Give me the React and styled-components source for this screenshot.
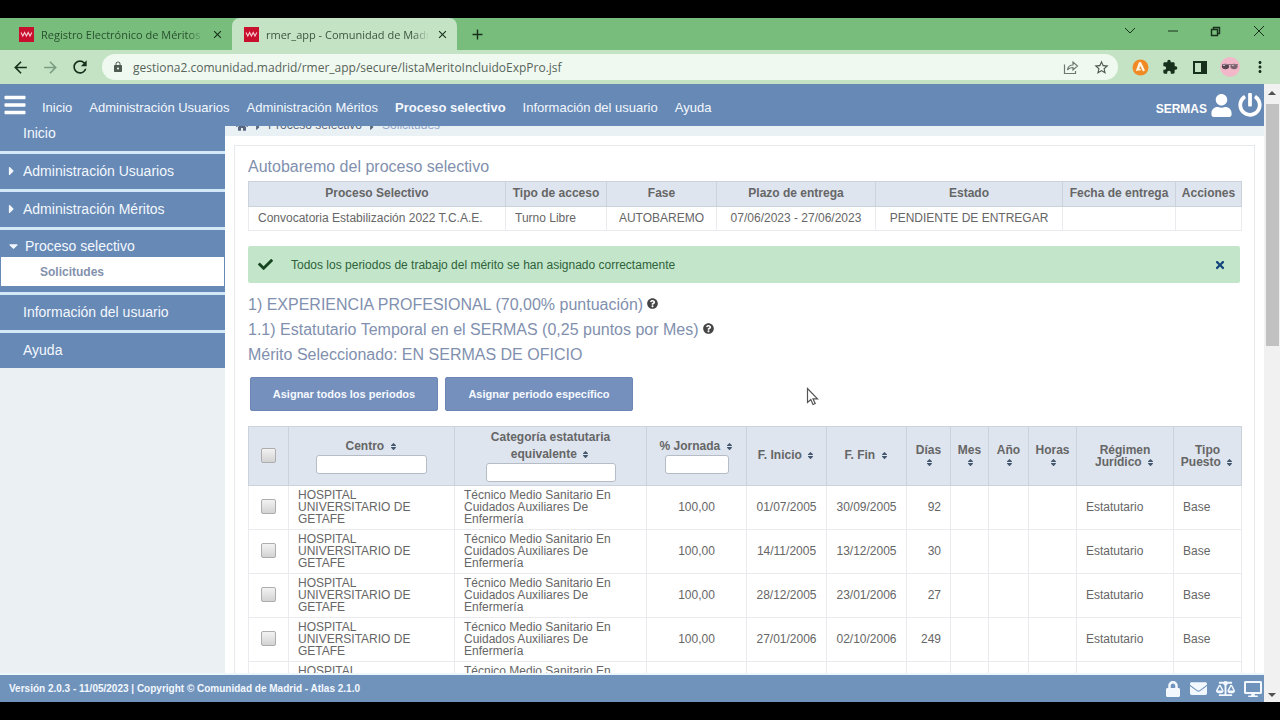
import React from "react";
import styled, { createGlobalStyle } from "styled-components";
import {
  FaBalanceScale,
  FaBars,
  FaCaretDown,
  FaCaretRight,
  FaCheck,
  FaDesktop,
  FaEnvelope,
  FaHome,
  FaLock,
  FaPowerOff,
  FaQuestionCircle,
  FaSort,
  FaTimes,
  FaUser,
} from "react-icons/fa";
import {
  MdAdd,
  MdArrowBack,
  MdArrowForward,
  MdClose,
  MdExtension,
  MdLock,
  MdMoreVert,
  MdRefresh,
  MdStarBorder,
} from "react-icons/md";

const GlobalStyle = createGlobalStyle`
  * {
    box-sizing: border-box;
  }
  body {
    margin: 0;
    background: #000;
    color: #666;
    font-family: "Liberation Sans", Arial, sans-serif;
    font-size: 12px;
  }
  button,
  input {
    font-family: inherit;
  }
  a {
    color: inherit;
    text-decoration: none;
  }
  svg {
    flex: none;
  }
`;

const Screen = styled.div`
  display: flex;
  flex-direction: column;
  height: 100vh;
  padding: 18px 0;
  overflow: hidden;
`;

/* browser */

const TabStrip = styled.div`
  display: flex;
  flex: none;
  align-items: stretch;
  height: 32px;
  padding-left: 7px;
  background: #78bd7c;
  font-family: "Open Sans", "Noto Sans", sans-serif;
  font-size: 11px;
`;

const Tab = styled.div`
  display: flex;
  align-items: center;
  gap: 7px;
  width: 225px;
  padding: 0 8px 0 12px;
  border-radius: 8px 8px 0 0;
  background: ${(props) => (props.$active ? "#c4e3c4" : "transparent")};
  color: ${(props) => (props.$active ? "#3c5540" : "#28502e")};
`;

const TabTitle = styled.span`
  flex: 1;
  overflow: hidden;
  white-space: nowrap;
  mask-image: linear-gradient(to right, #000 90%, transparent);
`;

const IconButton = styled.button`
  display: flex;
  align-items: center;
  justify-content: center;
  width: ${(props) => props.$width || 30}px;
  padding: 0;
  border: 0;
  background: none;
  color: ${(props) => props.$color || "#16301b"};
  cursor: pointer;
`;

const WindowButtons = styled.div`
  display: flex;
  margin-left: auto;
  padding-bottom: 6px;
`;

const Toolbar = styled.div`
  display: flex;
  flex: none;
  align-items: center;
  height: 34px;
  padding: 0 5px;
  background: #c4e3c4;
`;

const AddressBar = styled.div`
  display: flex;
  flex: 1;
  align-items: center;
  height: 26px;
  margin: 0 7px;
  padding: 0 2px 0 10px;
  border-radius: 13px;
  background: #f0f9f0;
  color: #4d5a50;
`;

const AddressInput = styled.input`
  flex: 1;
  min-width: 0;
  padding: 0 9px;
  border: 0;
  outline: 0;
  background: none;
  color: #56645a;
  font-family: "Open Sans", "Noto Sans", sans-serif;
  font-size: 12px;
`;

/* application */

const Viewport = styled.div`
  display: flex;
  flex: 1;
  min-height: 0;
  background: #fff;
`;

const AppFrame = styled.div`
  display: flex;
  flex: 1;
  flex-direction: column;
  min-width: 0;
`;

const Header = styled.header`
  display: flex;
  flex: none;
  align-items: center;
  height: 42px;
  padding-right: 1px;
  background: #6789b5;
  color: #fff;
`;

const Nav = styled.nav`
  display: flex;
  gap: 17px;
  padding: 4px 0 0 12px;
`;

const NavLink = styled.a`
  color: #f3f8ff;
  font-size: 13px;
  font-weight: ${(props) => (props.$current ? "bold" : "normal")};
`;

const UserArea = styled.div`
  display: flex;
  align-items: center;
  gap: 3px;
  margin-left: auto;
  font-weight: bold;
`;

const UserName = styled.span`
  padding-top: 8px;
`;

const Body = styled.div`
  display: flex;
  flex: 1;
  min-height: 0;
  overflow: hidden;
`;

const Sidebar = styled.aside`
  flex: none;
  width: 225px;
  background: #ebf0f2;
`;

const MenuItem = styled.div`
  border-bottom: 3px solid #d3e9f7;
  background: #6789b5;

  &:last-child {
    border-bottom: 0;
  }
`;

const MenuLink = styled.a`
  display: flex;
  align-items: center;
  height: 35px;
  padding: 0 0 2px 23px;
  color: #f3f8ff;
  font-size: 14px;

  svg {
    width: 9px;
    margin: 0 7px 0 -16px;
  }
`;

/* first entry, partly scrolled under the header */
const FirstLink = styled(MenuLink)`
  height: 25px;
  padding-bottom: 12px;
`;

const OpenLink = styled(MenuLink)`
  height: 27px;
  padding: 4px 0 0 25px;
`;

const SubMenuLink = styled.a`
  display: flex;
  align-items: center;
  height: 29px;
  margin: 0 1px;
  padding-left: 39px;
  background: #fff;
  color: #8491ad;
  font-weight: bold;
`;

const SubMenu = styled.div`
  padding-bottom: 6px;
`;

const Main = styled.main`
  flex: 1;
  min-width: 0;
`;

/* only the last pixels show below the fixed header */
const Breadcrumb = styled.div`
  display: flex;
  align-items: flex-end;
  gap: 5px;
  height: 10px;
  padding: 0 0 4px 11px;
  overflow: hidden;
  background: #e9f1f5;
  color: #56657c;
  line-height: 14px;

  a:last-child {
    color: #8fa5cb;
  }
`;

const Panel = styled.section`
  margin: 9px 9px 0;
  padding: 8px 14px 8px 13px;
  border: 1px solid #e6eaec;
`;

const Heading = styled.h2`
  display: flex;
  align-items: center;
  gap: 4px;
  margin: 0;
  color: #8190ae;
  font-size: 16px;
  font-weight: normal;
  line-height: 25px;

  svg {
    color: #444;
    margin-bottom: 2px;
  }
`;

const Message = styled.div`
  display: flex;
  align-items: center;
  gap: 18px;
  height: 37px;
  margin: 15px 0 9px;
  padding: 0 10px;
  border-radius: 2px;
  background: #c3e6cb;
  color: #2e6239;
`;

const MessageText = styled.span`
  flex: 1;
`;

const Buttons = styled.div`
  display: flex;
  gap: 7px;
  margin: 10px 0 15px 2px;
`;

const ActionButton = styled.button`
  width: 188px;
  height: 34px;
  border: 1px solid #6c86b5;
  border-radius: 2px;
  background: #7590bd;
  color: #f6f9ff;
  font-size: 11px;
  font-weight: bold;
`;

const Table = styled.table`
  width: 100%;
  margin-top: 2px;
  border-collapse: collapse;
  table-layout: fixed;
`;

const HeadCell = styled.th`
  height: ${(props) => props.$height}px;
  padding: 0 0 1px;
  border: 1px solid #cbd2db;
  background: #dee5ef;
  color: #666;
  line-height: ${(props) => props.$line || 17}px;

  svg {
    margin-left: 1px;
    color: #45586f;
    vertical-align: -1px;
  }
`;

const Cell = styled.td`
  height: ${(props) => props.$height || 44}px;
  padding: 0 9px 2px;
  border: 1px solid #e9ebee;
  line-height: 12px;
  text-align: ${(props) => props.$align || "left"};
`;

const Checkbox = styled.input.attrs({ type: "checkbox" })`
  display: block;
  width: 15px;
  height: 15px;
  margin: 0 auto;
  appearance: none;
  border: 1px solid #adadad;
  border-radius: 2px;
  background: linear-gradient(#f3f3f3, #d2d2d2);
`;

const Filter = styled.input`
  display: block;
  width: ${(props) => props.$width}px;
  height: 19px;
  margin: 0 auto;
  border: 1px solid #b5bcc5;
  border-radius: 3px;
  background: #fff;
`;

const Footer = styled.footer`
  display: flex;
  flex: none;
  align-items: center;
  justify-content: space-between;
  height: 29px;
  padding: 0 2px 0 9px;
  border-top: 2px solid #edf6fb;
  background: #7093bb;
  color: #f3f8ff;
  font-size: 10px;
  font-weight: bold;
`;

const FooterLinks = styled.div`
  display: flex;
  align-items: center;
  gap: 9px;

  a {
    display: flex;
  }
`;

const Scrollbar = styled.div`
  display: flex;
  flex: none;
  flex-direction: column;
  align-items: center;
  justify-content: space-between;
  width: 16px;
  padding: 7px 0 5px;
  background: #f1f1f1;
`;

const Thumb = styled.div`
  width: 13px;
  height: 40%;
  margin: 9px 0 auto;
  background: #c1c1c1;
`;

const Pointer = styled.svg`
  position: absolute;
  top: 387px;
  left: 806px;
`;

const processHead = [
  ["Proceso Selectivo", 257],
  ["Tipo de acceso", 101],
  ["Fase", 110],
  ["Plazo de entrega", 159],
  ["Estado", 187],
  ["Fecha de entrega", 113],
  ["Acciones", 66],
];

const processRow = [
  "Convocatoria Estabilización 2022 T.C.A.E.",
  "Turno Libre",
  "AUTOBAREMO",
  "07/06/2023 - 27/06/2023",
  "PENDIENTE DE ENTREGAR",
  "",
  "",
];

const periodColumns = [40, 166, 192, 100, 80, 80, 44, 38, 40, 48, 97, 68];

const periods = [
  ["01/07/2005", "30/09/2005", 92],
  ["14/11/2005", "13/12/2005", 30],
  ["28/12/2005", "23/01/2006", 27],
  ["27/01/2006", "02/10/2006", 249],
  ["03/10/2006", "31/12/2006", 90],
];

function Favicon() {
  return (
    <svg width="15" height="15" viewBox="0 0 15 15">
      <rect width="15" height="15" fill="#c8102e" />
      <path
        d="M2 5.5l1.8 3.5 1.8-3.5 1.8 3.5 1.8-3.5L11 9l1.8-3.5"
        fill="none"
        stroke="#f6cdd3"
        strokeWidth="1.1"
      />
    </svg>
  );
}

function Browser() {
  return (
    <>
      <TabStrip>
        <Tab>
          <Favicon />
          <TabTitle>Registro Electrónico de Méritos de</TabTitle>
          <IconButton $width={13} aria-label="Cerrar pestaña">
            <MdClose size={13} />
          </IconButton>
        </Tab>
        <Tab $active>
          <Favicon />
          <TabTitle>rmer_app - Comunidad de Madrid</TabTitle>
          <IconButton $width={13} aria-label="Cerrar pestaña">
            <MdClose size={13} />
          </IconButton>
        </Tab>
        <IconButton $width={40} aria-label="Nueva pestaña">
          <MdAdd size={17} />
        </IconButton>
        <WindowButtons>
          <IconButton $width={43} aria-label="Buscar pestañas">
            <svg width="12" height="8" viewBox="0 0 12 8">
              <path d="M1 1l5 5 5-5" fill="none" stroke="currentColor" />
            </svg>
          </IconButton>
          <IconButton $width={43} aria-label="Minimizar">
            <svg width="10" height="2">
              <path d="M0 1h10" stroke="currentColor" />
            </svg>
          </IconButton>
          <IconButton $width={43} aria-label="Restaurar">
            <svg width="11" height="11" viewBox="0 0 11 11">
              <path
                d="M1.5 3.5h6v6h-6zM3.5 3V1.5h6v6H8"
                fill="none"
                stroke="currentColor"
                strokeWidth="1.4"
              />
            </svg>
          </IconButton>
          <IconButton $width={43} aria-label="Cerrar">
            <svg width="10" height="10" viewBox="0 0 10 10">
              <path d="M0 0l10 10M10 0L0 10" stroke="currentColor" />
            </svg>
          </IconButton>
        </WindowButtons>
      </TabStrip>
      <Toolbar>
        <IconButton aria-label="Atrás">
          <MdArrowBack size={19} />
        </IconButton>
        <IconButton $color="#7b9c80" aria-label="Adelante">
          <MdArrowForward size={19} />
        </IconButton>
        <IconButton aria-label="Recargar">
          <MdRefresh size={20} />
        </IconButton>
        <AddressBar>
          <MdLock size={12} />
          <AddressInput
            aria-label="Dirección"
            defaultValue="gestiona2.comunidad.madrid/rmer_app/secure/listaMeritoIncluidoExpPro.jsf"
          />
          <IconButton $color="#6c786f" aria-label="Compartir">
            <svg width="16" height="15" viewBox="0 0 16 15">
              <path
                d="M1.5 4.5v9h11V11M4.5 10c.4-3 2.4-5 5.5-5V2l4.5 4-4.5 4V7.5c-2.5 0-4.2.7-5.5 2.5z"
                fill="none"
                stroke="currentColor"
                strokeWidth="1.2"
              />
            </svg>
          </IconButton>
          <IconButton $color="#4d5a50" aria-label="Marcador">
            <MdStarBorder size={17} />
          </IconButton>
        </AddressBar>
        <IconButton aria-label="Avast">
          <svg width="17" height="17" viewBox="0 0 17 17">
            <circle cx="8.5" cy="8.5" r="8" fill="#f08a24" />
            <path
              d="M8 3c1 0 1.3.6 1.7 1.5l3.3 7-2 1L8.3 7l-1 2.5L9.8 11l-6 1 2.7-7.5C6.8 3.5 7.2 3 8 3z"
              fill="#fff3e2"
            />
          </svg>
        </IconButton>
        <IconButton aria-label="Extensiones">
          <MdExtension size={16} />
        </IconButton>
        <IconButton aria-label="Panel lateral">
          <svg width="14" height="13" viewBox="0 0 14 13">
            <path d="M1 1h12v11H1z" fill="none" stroke="currentColor" strokeWidth="2" />
            <path d="M8 1h5v11H8z" fill="currentColor" />
          </svg>
        </IconButton>
        <IconButton aria-label="Perfil">
          <svg width="20" height="20" viewBox="0 0 20 20">
            <circle cx="10" cy="10" r="10" fill="#f2b8c9" />
            <ellipse cx="5.5" cy="9.5" rx="3.6" ry="2.8" fill="#5a4650" />
            <ellipse cx="14" cy="9.5" rx="3.6" ry="2.8" fill="#7b6470" />
            <path d="M2 7.5h16" stroke="#8d7480" />
            <path d="M3 8.5h2M12 8.5h2" stroke="#c9b3bd" />
          </svg>
        </IconButton>
        <IconButton aria-label="Menú">
          <MdMoreVert size={18} />
        </IconButton>
      </Toolbar>
    </>
  );
}

function Menu() {
  return (
    <Sidebar>
      <MenuItem>
        <FirstLink href="#">Inicio</FirstLink>
      </MenuItem>
      <MenuItem>
        <MenuLink href="#">
          <FaCaretRight size={14} />
          Administración Usuarios
        </MenuLink>
      </MenuItem>
      <MenuItem>
        <MenuLink href="#">
          <FaCaretRight size={14} />
          Administración Méritos
        </MenuLink>
      </MenuItem>
      <MenuItem>
        <OpenLink href="#">
          <FaCaretDown size={14} />
          Proceso selectivo
        </OpenLink>
        <SubMenu>
          <SubMenuLink href="#">Solicitudes</SubMenuLink>
        </SubMenu>
      </MenuItem>
      <MenuItem>
        <MenuLink href="#">Información del usuario</MenuLink>
      </MenuItem>
      <MenuItem>
        <MenuLink href="#">Ayuda</MenuLink>
      </MenuItem>
    </Sidebar>
  );
}

function ProcessTable() {
  return (
    <Table>
      <colgroup>
        {processHead.map(([name, width]) => (
          <col key={name} width={width} />
        ))}
      </colgroup>
      <thead>
        <tr>
          {processHead.map(([name]) => (
            <HeadCell key={name} $height={25}>
              {name}
            </HeadCell>
          ))}
        </tr>
      </thead>
      <tbody>
        <tr>
          {processRow.map((text, i) => (
            <Cell key={i} $height={24} $align={i > 1 ? "center" : "left"}>
              {text}
            </Cell>
          ))}
        </tr>
      </tbody>
    </Table>
  );
}

function PeriodTable() {
  return (
    <Table>
      <colgroup>
        {periodColumns.map((width, i) => (
          <col key={i} width={width} />
        ))}
      </colgroup>
      <thead>
        <tr>
          <HeadCell $height={59}>
            <Checkbox aria-label="Seleccionar todos" />
          </HeadCell>
          <HeadCell>
            <label htmlFor="centro">
              Centro <FaSort size={9} />
            </label>
            <Filter id="centro" $width={111} />
          </HeadCell>
          <HeadCell>
            <label htmlFor="categoria">
              Categoría estatutaria
              <br />
              equivalente <FaSort size={9} />
            </label>
            <Filter id="categoria" $width={130} />
          </HeadCell>
          <HeadCell>
            <label htmlFor="jornada">
              % Jornada <FaSort size={9} />
            </label>
            <Filter id="jornada" $width={64} />
          </HeadCell>
          <HeadCell>
            F. Inicio <FaSort size={9} />
          </HeadCell>
          <HeadCell>
            F. Fin <FaSort size={9} />
          </HeadCell>
          {["Días", "Mes", "Año", "Horas"].map((name) => (
            <HeadCell key={name} $line={12}>
              {name}
              <br />
              <FaSort size={9} />
            </HeadCell>
          ))}
          <HeadCell $line={12}>
            Régimen
            <br />
            Jurídico <FaSort size={9} />
          </HeadCell>
          <HeadCell $line={12}>
            Tipo
            <br />
            Puesto <FaSort size={9} />
          </HeadCell>
        </tr>
      </thead>
      <tbody>
        {periods.map(([start, end, days]) => (
          <tr key={start}>
            <Cell>
              <Checkbox aria-label={"Periodo " + start} />
            </Cell>
            <Cell>
              HOSPITAL
              <br />
              UNIVERSITARIO DE
              <br />
              GETAFE
            </Cell>
            <Cell>Técnico Medio Sanitario En Cuidados Auxiliares De Enfermería</Cell>
            <Cell $align="center">100,00</Cell>
            <Cell $align="center">{start}</Cell>
            <Cell $align="center">{end}</Cell>
            <Cell $align="right">{days}</Cell>
            <Cell />
            <Cell />
            <Cell />
            <Cell>Estatutario</Cell>
            <Cell>Base</Cell>
          </tr>
        ))}
      </tbody>
    </Table>
  );
}

export default function App() {
  return (
    <Screen>
      <GlobalStyle />
      <Browser />
      <Viewport>
        <AppFrame>
          <Header>
            <IconButton $color="#fff" aria-label="Menú principal">
              <FaBars size={24} />
            </IconButton>
            <Nav>
              <NavLink href="#">Inicio</NavLink>
              <NavLink href="#">Administración Usuarios</NavLink>
              <NavLink href="#">Administración Méritos</NavLink>
              <NavLink href="#" $current>
                Proceso selectivo
              </NavLink>
              <NavLink href="#">Información del usuario</NavLink>
              <NavLink href="#">Ayuda</NavLink>
            </Nav>
            <UserArea>
              <UserName>SERMAS</UserName>
              <FaUser size={23} />
              <IconButton $width={27} $color="#fff" aria-label="Salir">
                <FaPowerOff size={24} />
              </IconButton>
            </UserArea>
          </Header>
          <Body>
            <Menu />
            <Main>
              <Breadcrumb>
                <FaHome size={12} />
                <FaCaretRight size={10} />
                <a href="#">Proceso selectivo</a>
                <FaCaretRight size={10} />
                <a href="#">Solicitudes</a>
              </Breadcrumb>
              <Panel>
                <Heading>Autobaremo del proceso selectivo</Heading>
                <ProcessTable />
                <Message role="status">
                  <FaCheck size={15} color="#17451f" />
                  <MessageText>
                    Todos los periodos de trabajo del mérito se han asignado correctamente
                  </MessageText>
                  <IconButton $width={20} $color="#14477d" aria-label="Cerrar mensaje">
                    <FaTimes size={12} />
                  </IconButton>
                </Message>
                <Heading>
                  1) EXPERIENCIA PROFESIONAL (70,00% puntuación)
                  <FaQuestionCircle size={11} />
                </Heading>
                <Heading>
                  1.1) Estatutario Temporal en el SERMAS (0,25 puntos por Mes)
                  <FaQuestionCircle size={11} />
                </Heading>
                <Heading>Mérito Seleccionado: EN SERMAS DE OFICIO</Heading>
                <Buttons>
                  <ActionButton>Asignar todos los periodos</ActionButton>
                  <ActionButton>Asignar periodo específico</ActionButton>
                </Buttons>
                <PeriodTable />
              </Panel>
            </Main>
          </Body>
          <Footer>
            <span>Versión 2.0.3 - 11/05/2023 | Copyright © Comunidad de Madrid - Atlas 2.1.0</span>
            <FooterLinks>
              <a href="#" aria-label="Privacidad">
                <FaLock size={16} />
              </a>
              <a href="#" aria-label="Contacto">
                <FaEnvelope size={17} />
              </a>
              <a href="#" aria-label="Aviso legal">
                <FaBalanceScale size={19} />
              </a>
              <a href="#" aria-label="Escritorio">
                <FaDesktop size={18} />
              </a>
            </FooterLinks>
          </Footer>
        </AppFrame>
        <Scrollbar>
          <svg width="8" height="4" viewBox="0 0 8 4">
            <path d="M0 4l4-4 4 4z" fill="#505050" />
          </svg>
          <Thumb />
          <svg width="8" height="4" viewBox="0 0 8 4">
            <path d="M0 0l4 4 4-4z" fill="#505050" />
          </svg>
        </Scrollbar>
      </Viewport>
      <Pointer width="13" height="19" viewBox="0 0 13 19">
        <path
          d="M1.5 1.5v14l3.3-3 2.2 5 2.2-1L7 11.8h4.5z"
          fill="#fff"
          stroke="#555"
          strokeWidth="1.2"
        />
      </Pointer>
    </Screen>
  );
}
